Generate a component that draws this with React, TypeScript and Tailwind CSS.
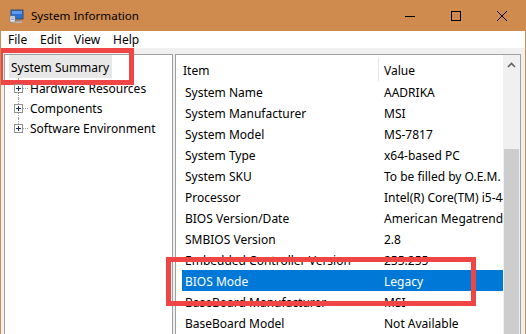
import React from "react";

const rows: [string, string][] = [
  ["System Name", "AADRIKA"],
  ["System Manufacturer", "MSI"],
  ["System Model", "MS-7817"],
  ["System Type", "x64-based PC"],
  ["System SKU", "To be filled by O.E.M."],
  ["Processor", "Intel(R) Core(TM) i5-4460 CPU @ 3.20GHz"],
  ["BIOS Version/Date", "American Megatrends Inc. V1.1, 4/23/2014"],
  ["SMBIOS Version", "2.8"],
  ["Embedded Controller Version", "255.255"],
  ["BIOS Mode", "Legacy"],
  ["BaseBoard Manufacturer", "MSI"],
  ["BaseBoard Model", "Not Available"],
];

function PlusBox() {
  return (
    <div className="relative z-10 w-[9px] h-[9px] border border-[#919191] bg-white flex items-center justify-center shrink-0">
      <svg width="7" height="7" viewBox="0 0 7 7">
        <path d="M1 3.5H6M3.5 1V6" stroke="#1c2a5c" strokeWidth="1" shapeRendering="crispEdges" />
      </svg>
    </div>
  );
}

function TreeItem({ label, last }: { label: string; last?: boolean }) {
  return (
    <div className="relative flex items-center h-[20px] pl-[9px]">
      <div
        className={`absolute left-[13px] top-0 border-l border-dotted border-[#a0a0a0] ${
          last ? "h-[10px]" : "h-[20px]"
        }`}
      />
      <PlusBox />
      <div className="w-[5px] border-t border-dotted border-[#a0a0a0]" />
      <span className="ml-[2px] whitespace-nowrap">{label}</span>
    </div>
  );
}

export default function App() {
  return (
    <div className="relative w-[526px] h-[334px] overflow-hidden bg-[#f0f0f0] border-x border-[#cf8a4e] font-['Noto_Sans',sans-serif] text-[12px] text-black leading-[17px]">
      {/* Title bar */}
      <div className="h-[31px] bg-[#cf8a4e] flex items-center">
        <div className="ml-[8px] w-[16px] h-[16px]">
          <svg width="16" height="16" viewBox="0 0 16 16">
            <rect x="1.5" y="1.5" width="13" height="10" fill="#3d4f66" />
            <rect x="2.5" y="2.5" width="11" height="8" fill="#2a6fd4" />
            <rect x="3" y="3" width="10" height="3" fill="#5b9bef" />
            <rect x="5" y="12" width="6" height="1.5" fill="#8a8a8a" />
            <rect x="3" y="13.5" width="10" height="1.5" fill="#b5b5b5" />
            <rect x="1" y="8" width="5" height="6" fill="#f2f2f2" stroke="#777" strokeWidth="0.6" />
            <rect x="2.2" y="9.5" width="2.6" height="0.8" fill="#3b74c9" />
            <rect x="2.2" y="11.3" width="2.6" height="0.8" fill="#3b74c9" />
          </svg>
        </div>
        <span className="ml-[6px] text-[11.6px] text-black whitespace-nowrap">System Information</span>
        <div className="ml-auto flex h-full">
          <div className="w-[46px] h-full flex items-center justify-center">
            <svg width="10" height="10" viewBox="0 0 10 10">
              <path d="M0 5.5H10" stroke="#000" strokeWidth="1" shapeRendering="crispEdges" />
            </svg>
          </div>
          <div className="w-[46px] h-full flex items-center justify-center">
            <svg width="10" height="10" viewBox="0 0 10 10">
              <rect x="0.5" y="0.5" width="9" height="9" fill="none" stroke="#000" strokeWidth="1" shapeRendering="crispEdges" />
            </svg>
          </div>
          <div className="w-[46px] h-full flex items-center justify-center">
            <svg width="10" height="10" viewBox="0 0 10 10">
              <path d="M0 0L10 10M10 0L0 10" stroke="#000" strokeWidth="1" />
            </svg>
          </div>
        </div>
      </div>

      {/* Menu bar */}
      <div className="h-[17px] bg-white flex items-center">
        <span className="ml-[7px] w-[32px]">File</span>
        <span className="w-[34px]">Edit</span>
        <span className="w-[39px]">View</span>
        <span>Help</span>
      </div>

      {/* Body */}
      <div className="flex pt-[6px] pl-[3px] h-[286px]">
        {/* Left tree panel */}
        <div className="w-[169px] h-[300px] bg-white border border-[#a0a0a0]">
          <div className="flex items-center h-[23px] ml-[4px] pl-[2px] pt-[1px] w-[103px] bg-[#e8e8e8] whitespace-nowrap">
            System Summary
          </div>
          <div className="relative">
            <TreeItem label="Hardware Resources" />
            <TreeItem label="Components" />
            <TreeItem label="Software Environment" last />
          </div>
        </div>

        {/* Right list panel */}
        <div className="ml-[2px] w-[346px] h-[300px] bg-white border border-[#a0a0a0] flex">
          <div className="w-[327px] overflow-hidden">
            {/* Header */}
            <div className="h-[26px] flex items-center pt-[4px]">
              <div className="w-[202px] pl-[7px]">Item</div>
              <div className="w-px h-[23px] bg-[#e5e5e5] self-start mt-[-1px]" />
              <div className="pl-[5px]">Value</div>
            </div>
            {/* Rows */}
            {rows.map(([k, v]) => {
              const sel = k === "BIOS Mode";
              return (
                <div
                  key={k}
                  className={`ml-[6px] h-[21px] flex items-center pt-[2px] ${
                    sel ? "bg-[#0078d7] text-white" : ""
                  }`}
                >
                  <div className="w-[196px] pl-[3px] overflow-hidden whitespace-nowrap pr-[2px]">{k}</div>
                  <div className="flex-1 pl-[6px] overflow-hidden whitespace-nowrap">{v}</div>
                </div>
              );
            })}
          </div>
          {/* Scrollbar */}
          <div className="w-[17px] bg-[#f0f0f0] flex flex-col">
            <div className="h-[19px] flex items-center justify-center">
              <svg width="9" height="6" viewBox="0 0 9 6">
                <path d="M1 5L4.5 1.5L8 5" fill="none" stroke="#606060" strokeWidth="1.6" />
              </svg>
            </div>
            <div className="mt-[75px] mx-[1px] flex-1 bg-[#cdcdcd]" />
          </div>
        </div>
      </div>

      {/* Red annotation boxes */}
      <div className="absolute left-[-3px] top-[48px] w-[136px] h-[37px] border-[5px] border-[#f04545]" />
      <div className="absolute left-[165px] top-[257px] w-[310px] h-[49px] border-[5px] border-[#f04545]" />
    </div>
  );
}
